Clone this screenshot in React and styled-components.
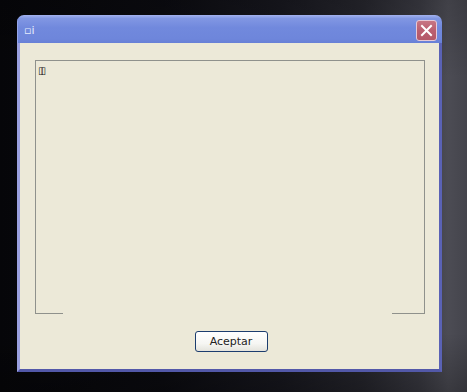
import styled, { createGlobalStyle } from "styled-components";

const Global = createGlobalStyle`
  html, body {
    margin: 0;
    padding: 0;
    background: #000;
  }
  #root {
    width: 467px;
    height: 392px;
    overflow: hidden;
  }
`;

const Desktop = styled.div`
  width: 467px;
  height: 392px;
  box-sizing: border-box;
  padding: 15px 25px 20px 17px;
  background:
    linear-gradient(180deg, rgba(0, 0, 0, 0.15) 0%, rgba(0, 0, 0, 0) 20%, rgba(0, 0, 0, 0) 85%, rgba(0, 0, 0, 0.25) 100%),
    linear-gradient(90deg, #060609 0%, #0b0b10 35%, #17171e 60%, #26262d 78%, #3a3a42 90%, #4c4c54 96%, #44444c 100%);
  font-family: Tahoma, "DejaVu Sans", "Liberation Sans", sans-serif;
`;

const Window = styled.div`
  width: 425px;
  height: 357px;
  display: flex;
  flex-direction: column;
  border-radius: 7px 7px 0 0;
  overflow: hidden;
`;

const TitleBar = styled.div`
  height: 28px;
  flex: none;
  display: flex;
  align-items: center;
  justify-content: space-between;
  padding: 0 5px 0 7px;
  background: linear-gradient(180deg, #a3b2ee 0%, #8197e3 12%, #7189dd 45%, #6e86db 85%, #6780d6 100%);
  box-shadow: inset 1px 0 0 #95a5ea;
`;

const Title = styled.span`
  color: #e6ecfc;
  font-size: 11px;
  letter-spacing: 0px;
  font-family: "DejaVu Sans", sans-serif;
  margin-top: 2px;
`;

const CloseButton = styled.div`
  width: 19px;
  height: 19px;
  margin-top: 3px;
  border: 1px solid #e6c9d6;
  border-radius: 3px;
  background: linear-gradient(180deg, #c77684 0%, #bb5f70 50%, #b45868 100%);
  display: flex;
  align-items: center;
  justify-content: center;
`;

const Body = styled.div`
  flex: 1;
  display: flex;
  flex-direction: column;
  align-items: stretch;
  background: #ece9d8;
  border-left: 3px solid #9aa0df;
  border-right: 3px solid #5a62b5;
  border-bottom: 3px solid #5258a8;
  padding: 17px 14px 17px 15px;
`;

const Frame = styled.div`
  height: 254px;
  display: flex;
  flex-direction: column;
`;

const FrameInner = styled.div`
  flex: 1;
  border: 1px solid #8f918c;
  border-bottom: none;
  padding: 5px 2px;
`;

const FrameFoot = styled.div`
  height: 1px;
  display: flex;
  justify-content: space-between;
`;

const FootSeg = styled.div`
  width: ${(p) => p.$w}px;
  background: #8f918c;
`;

const Glyphs = styled.div`
  font-family: "DejaVu Sans", sans-serif;
  font-size: 10px;
  line-height: 10px;
  letter-spacing: -3px;
  color: #222;
`;

const Footer = styled.div`
  flex: 1;
  display: flex;
  align-items: flex-end;
  justify-content: center;
  padding-left: 2px;
`;

const Button = styled.button`
  width: 73px;
  height: 21px;
  border: 1px solid #1c3d6e;
  border-radius: 3px;
  background: linear-gradient(180deg, #ffffff 0%, #f6f6f3 60%, #e4e3dc 100%);
  font-family: Tahoma, "DejaVu Sans", "Liberation Sans", sans-serif;
  font-size: 11px;
  color: #222;
  padding: 0;
  cursor: pointer;
`;

export default function App() {
  return (
    <>
      <Global />
      <Desktop>
        <Window>
          <TitleBar>
            <Title>▫i</Title>
            <CloseButton>
              <svg width="13" height="13" viewBox="0 0 13 13">
                <path d="M2 2 L11 11 M11 2 L2 11" stroke="#fff" strokeWidth="2" strokeLinecap="square" />
              </svg>
            </CloseButton>
          </TitleBar>
          <Body>
            <Frame>
              <FrameInner>
                <Glyphs>▯▯</Glyphs>
              </FrameInner>
              <FrameFoot>
                <FootSeg $w={28} />
                <FootSeg $w={33} />
              </FrameFoot>
            </Frame>
            <Footer>
              <Button>Aceptar</Button>
            </Footer>
          </Body>
        </Window>
      </Desktop>
    </>
  );
}
